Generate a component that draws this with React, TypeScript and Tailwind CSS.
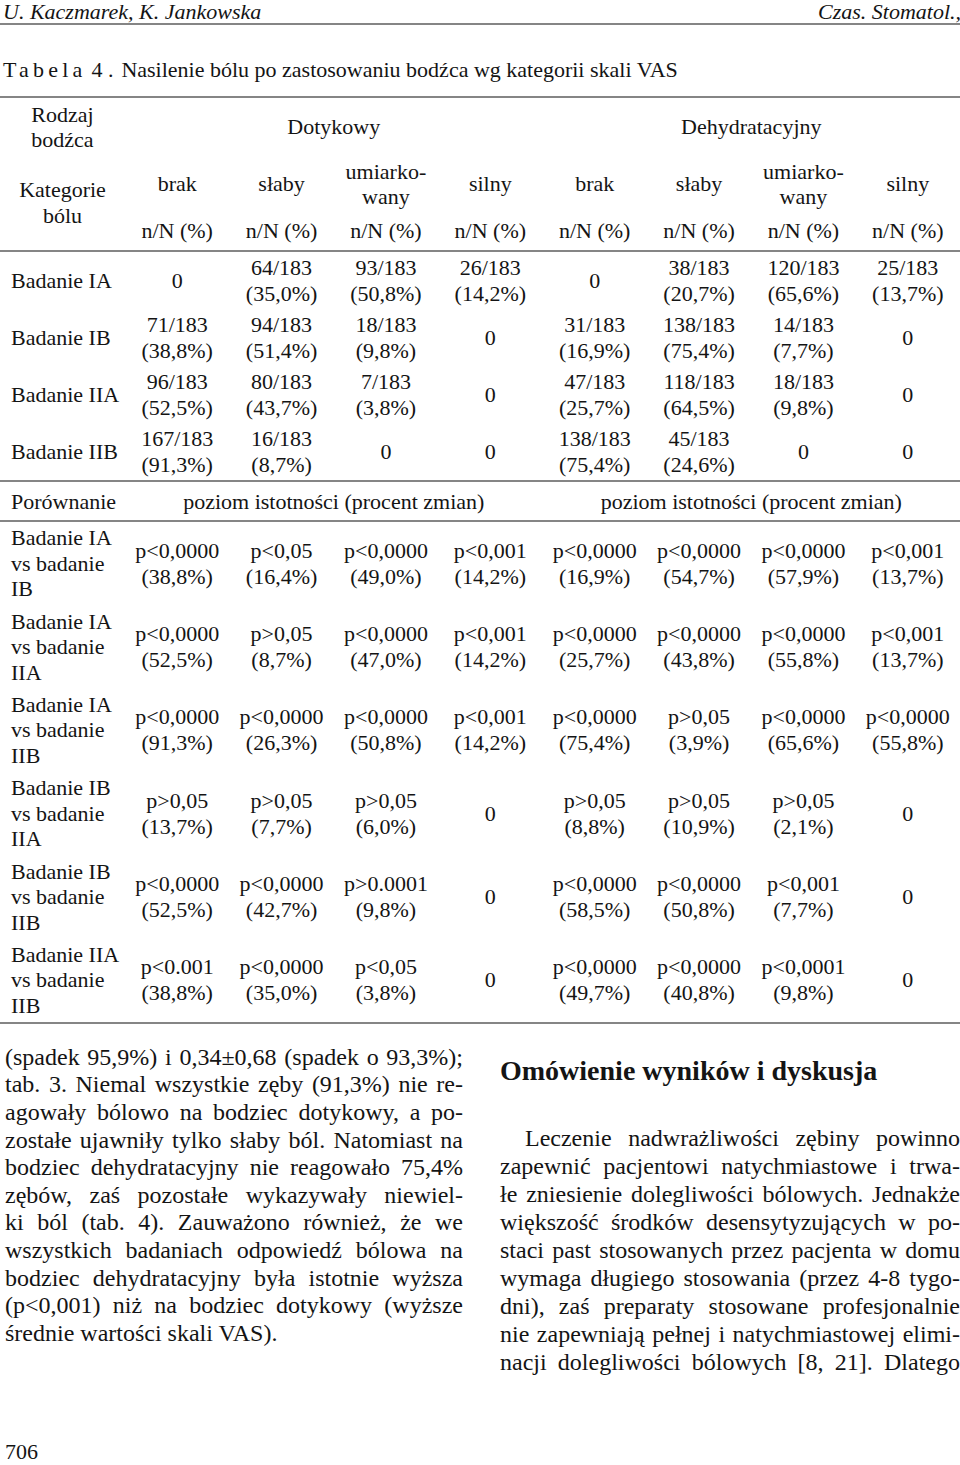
const line = 'h-[2px] bg-[#858585]'

const categories: string[][] = [
  ['brak'], ['słaby'], ['umiarko-', 'wany'], ['silny'],
  ['brak'], ['słaby'], ['umiarko-', 'wany'], ['silny'],
]

const results: { label: string; cells: string[][] }[] = [
  { label: 'Badanie IA', cells: [['0'], ['64/183', '(35,0%)'], ['93/183', '(50,8%)'], ['26/183', '(14,2%)'], ['0'], ['38/183', '(20,7%)'], ['120/183', '(65,6%)'], ['25/183', '(13,7%)']] },
  { label: 'Badanie IB', cells: [['71/183', '(38,8%)'], ['94/183', '(51,4%)'], ['18/183', '(9,8%)'], ['0'], ['31/183', '(16,9%)'], ['138/183', '(75,4%)'], ['14/183', '(7,7%)'], ['0']] },
  { label: 'Badanie IIA', cells: [['96/183', '(52,5%)'], ['80/183', '(43,7%)'], ['7/183', '(3,8%)'], ['0'], ['47/183', '(25,7%)'], ['118/183', '(64,5%)'], ['18/183', '(9,8%)'], ['0']] },
  { label: 'Badanie IIB', cells: [['167/183', '(91,3%)'], ['16/183', '(8,7%)'], ['0'], ['0'], ['138/183', '(75,4%)'], ['45/183', '(24,6%)'], ['0'], ['0']] },
]

const comparisons: { label: string[]; cells: string[][] }[] = [
  { label: ['Badanie IA', 'vs badanie', 'IB'], cells: [['p<0,0000', '(38,8%)'], ['p<0,05', '(16,4%)'], ['p<0,0000', '(49,0%)'], ['p<0,001', '(14,2%)'], ['p<0,0000', '(16,9%)'], ['p<0,0000', '(54,7%)'], ['p<0,0000', '(57,9%)'], ['p<0,001', '(13,7%)']] },
  { label: ['Badanie IA', 'vs badanie', 'IIA'], cells: [['p<0,0000', '(52,5%)'], ['p>0,05', '(8,7%)'], ['p<0,0000', '(47,0%)'], ['p<0,001', '(14,2%)'], ['p<0,0000', '(25,7%)'], ['p<0,0000', '(43,8%)'], ['p<0,0000', '(55,8%)'], ['p<0,001', '(13,7%)']] },
  { label: ['Badanie IA', 'vs badanie', 'IIB'], cells: [['p<0,0000', '(91,3%)'], ['p<0,0000', '(26,3%)'], ['p<0,0000', '(50,8%)'], ['p<0,001', '(14,2%)'], ['p<0,0000', '(75,4%)'], ['p>0,05', '(3,9%)'], ['p<0,0000', '(65,6%)'], ['p<0,0000', '(55,8%)']] },
  { label: ['Badanie IB', 'vs badanie', 'IIA'], cells: [['p>0,05', '(13,7%)'], ['p>0,05', '(7,7%)'], ['p>0,05', '(6,0%)'], ['0'], ['p>0,05', '(8,8%)'], ['p>0,05', '(10,9%)'], ['p>0,05', '(2,1%)'], ['0']] },
  { label: ['Badanie IB', 'vs badanie', 'IIB'], cells: [['p<0,0000', '(52,5%)'], ['p<0,0000', '(42,7%)'], ['p>0.0001', '(9,8%)'], ['0'], ['p<0,0000', '(58,5%)'], ['p<0,0000', '(50,8%)'], ['p<0,001', '(7,7%)'], ['0']] },
  { label: ['Badanie IIA', 'vs badanie', 'IIB'], cells: [['p<0.001', '(38,8%)'], ['p<0,0000', '(35,0%)'], ['p<0,05', '(3,8%)'], ['0'], ['p<0,0000', '(49,7%)'], ['p<0,0000', '(40,8%)'], ['p<0,0001', '(9,8%)'], ['0']] },
]

const leftText = [
  '(spadek 95,9%) i 0,34±0,68 (spadek o 93,3%);',
  'tab. 3. Niemal wszystkie zęby (91,3%) nie re-',
  'agowały bólowo na bodziec dotykowy, a po-',
  'zostałe ujawniły tylko słaby ból. Natomiast na',
  'bodziec dehydratacyjny nie reagowało 75,4%',
  'zębów, zaś pozostałe wykazywały niewiel-',
  'ki ból (tab. 4). Zauważono również, że we',
  'wszystkich badaniach odpowiedź bólowa na',
  'bodziec dehydratacyjny była istotnie wyższa',
  '(p<0,001) niż na bodziec dotykowy (wyższe',
]

const rightText = [
  'zapewnić pacjentowi natychmiastowe i trwa-',
  'łe zniesienie dolegliwości bólowych. Jednakże',
  'większość środków desensytyzujących w po-',
  'staci past stosowanych przez pacjenta w domu',
  'wymaga długiego stosowania (przez 4-8 tygo-',
  'dni), zaś preparaty stosowane profesjonalnie',
  'nie zapewniają pełnej i natychmiastowej elimi-',
  'nacji dolegliwości bólowych [8, 21]. Dlatego',
]

function Cell({ lines, lh = 'leading-[26px]' }: { lines: string[]; lh?: string }) {
  return (
    <div className={`flex flex-col items-center justify-center text-center ${lh}`}>
      {lines.map((l, i) => <span key={i} className="whitespace-nowrap">{l}</span>)}
    </div>
  )
}

function Justified({ text }: { text: string }) {
  return <div className="whitespace-nowrap text-justify [text-align-last:justify]">{text}</div>
}

export default function App() {
  return (
    <div className="w-[960px] h-[1465px] overflow-hidden bg-white text-[#141414] font-['Liberation_Serif','Times_New_Roman',serif]">
      {/* naglowek strony */}
      <div className="flex justify-between px-[3px] text-[22px] italic leading-[23px]">
        <span>U. Kaczmarek, K. Jankowska</span>
        <span className="-mr-[4px]">Czas. Stomatol.,</span>
      </div>
      <div className={line} />

      <div className="mt-[32px] px-[3px] text-[22px] leading-[26px] whitespace-nowrap">
        <span className="tracking-[0.19em]">Tabela</span>
        <span className="ml-[5px]">4 .</span>
        <span className="ml-[8px]">Nasilenie bólu po zastosowaniu bodźca wg kategorii skali VAS</span>
      </div>

      {/* tabela */}
      <div className="mt-[13px] text-[22px]">
        <div className={line} />
        <div className="grid grid-cols-[125px_repeat(8,1fr)] grid-rows-[57px_57px_38px]">
          <Cell lines={['Rodzaj', 'bodźca']} lh="leading-[25px]" />
          <div className="col-span-4 flex items-center justify-center">Dotykowy</div>
          <div className="col-span-4 flex items-center justify-center">Dehydratacyjny</div>
          <div className="row-span-2 flex flex-col items-center justify-center leading-[26px]">
            <span>Kategorie</span>
            <span>bólu</span>
          </div>
          {categories.map((c, i) => <Cell key={i} lines={c} lh="leading-[25px]" />)}
          {categories.map((_, i) => <Cell key={'n' + i} lines={['n/N (%)']} />)}
        </div>
        <div className={line} />

        {results.map(r => (
          <div key={r.label} className="grid grid-cols-[125px_repeat(8,1fr)] h-[57px]">
            <div className="flex items-center pl-[11px] whitespace-nowrap">{r.label}</div>
            {r.cells.map((c, i) => <Cell key={i} lines={c} />)}
          </div>
        ))}
        <div className={line} />

        <div className="grid grid-cols-[125px_repeat(8,1fr)] h-[38px]">
          <div className="flex items-center pl-[11px]">Porównanie</div>
          <div className="col-span-4 flex items-center justify-center">poziom istotności (procent zmian)</div>
          <div className="col-span-4 flex items-center justify-center">poziom istotności (procent zmian)</div>
        </div>
        <div className={line} />

        {comparisons.map((r, idx) => (
          <div key={idx} className="grid grid-cols-[125px_repeat(8,1fr)] h-[83.3px]">
            <div className="flex flex-col justify-center pl-[11px] leading-[25.5px] whitespace-nowrap">
              {r.label.map(l => <span key={l}>{l}</span>)}
            </div>
            {r.cells.map((c, i) => <Cell key={i} lines={c} />)}
          </div>
        ))}
        <div className={line} />
      </div>

      {/* tekst */}
      <div className="flex justify-between pl-[5px] text-[24px]">
        <div className="mt-[20px] w-[458px] leading-[27.6px]">
          {leftText.map((t, i) => <Justified key={i} text={t} />)}
          <div className="whitespace-nowrap">średnie wartości skali VAS).</div>
        </div>
        <div className="mt-[31px] w-[460px] leading-[28px]">
          <h2 className="text-[28px] font-bold leading-[32px]">Omówienie wyników i dyskusja</h2>
          <div className="mt-[37px] pl-[25px]">
            <Justified text="Leczenie nadwrażliwości zębiny powinno" />
          </div>
          {rightText.map((t, i) => <Justified key={i} text={t} />)}
        </div>
      </div>

      <div className="mt-[63px] pl-[5px] text-[22px] leading-[26px]">706</div>
    </div>
  )
}
